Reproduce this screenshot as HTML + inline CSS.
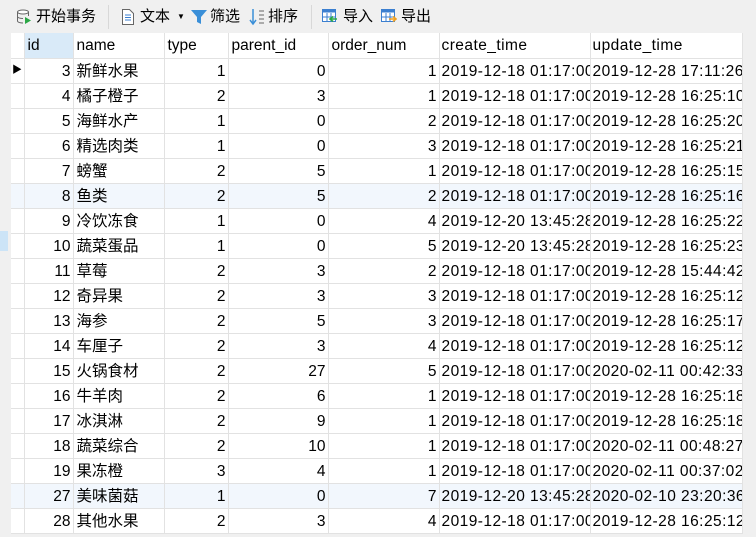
<!DOCTYPE html>
<html><head><meta charset="utf-8"><style>
*{margin:0;padding:0;box-sizing:border-box}
body{width:756px;height:537px;overflow:hidden;background:#f0f0f0;font-family:"Liberation Sans","Noto Sans CJK SC",sans-serif;font-size:15.5px;color:#000;position:relative}
.tb{position:absolute;left:0;top:0;width:756px;height:33px;background:#f0f0f0}
.ti{position:absolute;top:7px;font-size:15px;line-height:20px;white-space:nowrap}
.sep{position:absolute;top:5px;width:1px;height:24px;background:#d8d8d8}
table{position:absolute;left:11px;top:33px;width:731px;border-collapse:collapse;background:#fff;table-layout:fixed}
td{height:25px;border-right:1px solid #e2e2e2;border-bottom:1px solid #e2e2e2;padding:1px 2px 0 3px;white-space:nowrap;overflow:hidden;line-height:23px}
td.r{text-align:right}
td:nth-child(7),td:nth-child(8){letter-spacing:.45px;padding-left:2px;padding-right:0}
tr.b td{background:#f2f7fd}
td.g{background:#fff;padding:0}
</style></head><body>
<div class="tb">
<svg style="position:absolute;left:16px;top:9px" width="16" height="16" viewBox="0 0 16 16"><ellipse cx="7" cy="3" rx="5.5" ry="2" fill="#fff" stroke="#666"/><path d="M1.5 3v9c0 1.1 2.5 2 5.5 2M12.5 3v4M1.5 7.5c0 1.1 2.5 2 5.5 2" fill="none" stroke="#666"/><path d="M9 8l6 3.5-6 3.5z" fill="#2aa745"/></svg>
<span class="ti" style="left:36px">开始事务</span>
<div class="sep" style="left:108px"></div>
<svg style="position:absolute;left:121px;top:9px" width="14" height="16" viewBox="0 0 14 16"><path d="M1.5 .5h7l4 4v11h-11z" fill="#fff" stroke="#666"/><path d="M4 6h6M4 8.5h6M4 11h6" stroke="#3b7fd0"/></svg>
<span class="ti" style="left:140px">文本</span>
<span style="position:absolute;left:177px;top:12px;font-size:8px">▼</span>
<svg style="position:absolute;left:191px;top:9px" width="16" height="16" viewBox="0 0 16 16"><path d="M0 1h16l-6 7v7l-4-2v-5z" fill="#3a8fd8"/></svg>
<span class="ti" style="left:210px">筛选</span>
<svg style="position:absolute;left:249px;top:8px" width="16" height="18" viewBox="0 0 16 18"><path d="M4 1v14M1 12l3 4 3-4" stroke="#3a8fd8" fill="none" stroke-width="1.5"/><path d="M10 3h5M10 7h5M10 11h5M10 15h5" stroke="#666"/></svg>
<span class="ti" style="left:268px">排序</span>
<div class="sep" style="left:311px"></div>
<svg style="position:absolute;left:322px;top:9px" width="16" height="15" viewBox="0 0 16 15"><rect x=".5" y=".5" width="13" height="12" fill="#fff" stroke="#3b7fd0"/><rect x=".5" y=".5" width="13" height="3" fill="#3b7fd0"/><path d="M5 4v8M9 4v8M1 8h12" stroke="#3b7fd0"/><path d="M15 10h-6M11 7.5l-3 2.5 3 2.5" stroke="#2aa745" fill="none" stroke-width="1.6"/></svg>
<span class="ti" style="left:343px">导入</span>
<svg style="position:absolute;left:381px;top:9px" width="16" height="15" viewBox="0 0 16 15"><rect x=".5" y=".5" width="13" height="12" fill="#fff" stroke="#3b7fd0"/><rect x=".5" y=".5" width="13" height="3" fill="#3b7fd0"/><path d="M5 4v8M9 4v8M1 8h12" stroke="#3b7fd0"/><path d="M8 10h6M12 7.5l3 2.5-3 2.5" stroke="#f0a020" fill="none" stroke-width="1.6"/></svg>
<span class="ti" style="left:401px">导出</span>
</div>
<div style="position:absolute;left:0;top:231px;width:8px;height:20px;background:#cce4f7"></div>
<table>
<colgroup><col style="width:13px"><col style="width:49px"><col style="width:91px"><col style="width:64px"><col style="width:100px"><col style="width:111px"><col style="width:151px"><col style="width:152px"></colgroup>
<tr><td class="g"></td><td style="background:#d9eaf8">id</td><td>name</td><td>type</td><td>parent_id</td><td>order_num</td><td>create_time</td><td>update_time</td></tr>
<tr><td class="g" style="font-size:10px;padding-left:1px">▶</td><td class="r">3</td><td>新鲜水果</td><td class="r">1</td><td class="r">0</td><td class="r">1</td><td>2019-12-18 01:17:00</td><td>2019-12-28 17:11:26</td></tr>
<tr><td class="g"></td><td class="r">4</td><td>橘子橙子</td><td class="r">2</td><td class="r">3</td><td class="r">1</td><td>2019-12-18 01:17:00</td><td>2019-12-28 16:25:10</td></tr>
<tr><td class="g"></td><td class="r">5</td><td>海鲜水产</td><td class="r">1</td><td class="r">0</td><td class="r">2</td><td>2019-12-18 01:17:00</td><td>2019-12-28 16:25:20</td></tr>
<tr><td class="g"></td><td class="r">6</td><td>精选肉类</td><td class="r">1</td><td class="r">0</td><td class="r">3</td><td>2019-12-18 01:17:00</td><td>2019-12-28 16:25:21</td></tr>
<tr><td class="g"></td><td class="r">7</td><td>螃蟹</td><td class="r">2</td><td class="r">5</td><td class="r">1</td><td>2019-12-18 01:17:00</td><td>2019-12-28 16:25:15</td></tr>
<tr class="b"><td class="g"></td><td class="r">8</td><td>鱼类</td><td class="r">2</td><td class="r">5</td><td class="r">2</td><td>2019-12-18 01:17:00</td><td>2019-12-28 16:25:16</td></tr>
<tr><td class="g"></td><td class="r">9</td><td>冷饮冻食</td><td class="r">1</td><td class="r">0</td><td class="r">4</td><td>2019-12-20 13:45:28</td><td>2019-12-28 16:25:22</td></tr>
<tr><td class="g"></td><td class="r">10</td><td>蔬菜蛋品</td><td class="r">1</td><td class="r">0</td><td class="r">5</td><td>2019-12-20 13:45:28</td><td>2019-12-28 16:25:23</td></tr>
<tr><td class="g"></td><td class="r">11</td><td>草莓</td><td class="r">2</td><td class="r">3</td><td class="r">2</td><td>2019-12-18 01:17:00</td><td>2019-12-28 15:44:42</td></tr>
<tr><td class="g"></td><td class="r">12</td><td>奇异果</td><td class="r">2</td><td class="r">3</td><td class="r">3</td><td>2019-12-18 01:17:00</td><td>2019-12-28 16:25:12</td></tr>
<tr><td class="g"></td><td class="r">13</td><td>海参</td><td class="r">2</td><td class="r">5</td><td class="r">3</td><td>2019-12-18 01:17:00</td><td>2019-12-28 16:25:17</td></tr>
<tr><td class="g"></td><td class="r">14</td><td>车厘子</td><td class="r">2</td><td class="r">3</td><td class="r">4</td><td>2019-12-18 01:17:00</td><td>2019-12-28 16:25:12</td></tr>
<tr><td class="g"></td><td class="r">15</td><td>火锅食材</td><td class="r">2</td><td class="r">27</td><td class="r">5</td><td>2019-12-18 01:17:00</td><td>2020-02-11 00:42:33</td></tr>
<tr><td class="g"></td><td class="r">16</td><td>牛羊肉</td><td class="r">2</td><td class="r">6</td><td class="r">1</td><td>2019-12-18 01:17:00</td><td>2019-12-28 16:25:18</td></tr>
<tr><td class="g"></td><td class="r">17</td><td>冰淇淋</td><td class="r">2</td><td class="r">9</td><td class="r">1</td><td>2019-12-18 01:17:00</td><td>2019-12-28 16:25:18</td></tr>
<tr><td class="g"></td><td class="r">18</td><td>蔬菜综合</td><td class="r">2</td><td class="r">10</td><td class="r">1</td><td>2019-12-18 01:17:00</td><td>2020-02-11 00:48:27</td></tr>
<tr><td class="g"></td><td class="r">19</td><td>果冻橙</td><td class="r">3</td><td class="r">4</td><td class="r">1</td><td>2019-12-18 01:17:00</td><td>2020-02-11 00:37:02</td></tr>
<tr class="b"><td class="g"></td><td class="r">27</td><td>美味菌菇</td><td class="r">1</td><td class="r">0</td><td class="r">7</td><td>2019-12-20 13:45:28</td><td>2020-02-10 23:20:36</td></tr>
<tr><td class="g"></td><td class="r">28</td><td>其他水果</td><td class="r">2</td><td class="r">3</td><td class="r">4</td><td>2019-12-18 01:17:00</td><td>2019-12-28 16:25:12</td></tr>
</table>
</body></html>
